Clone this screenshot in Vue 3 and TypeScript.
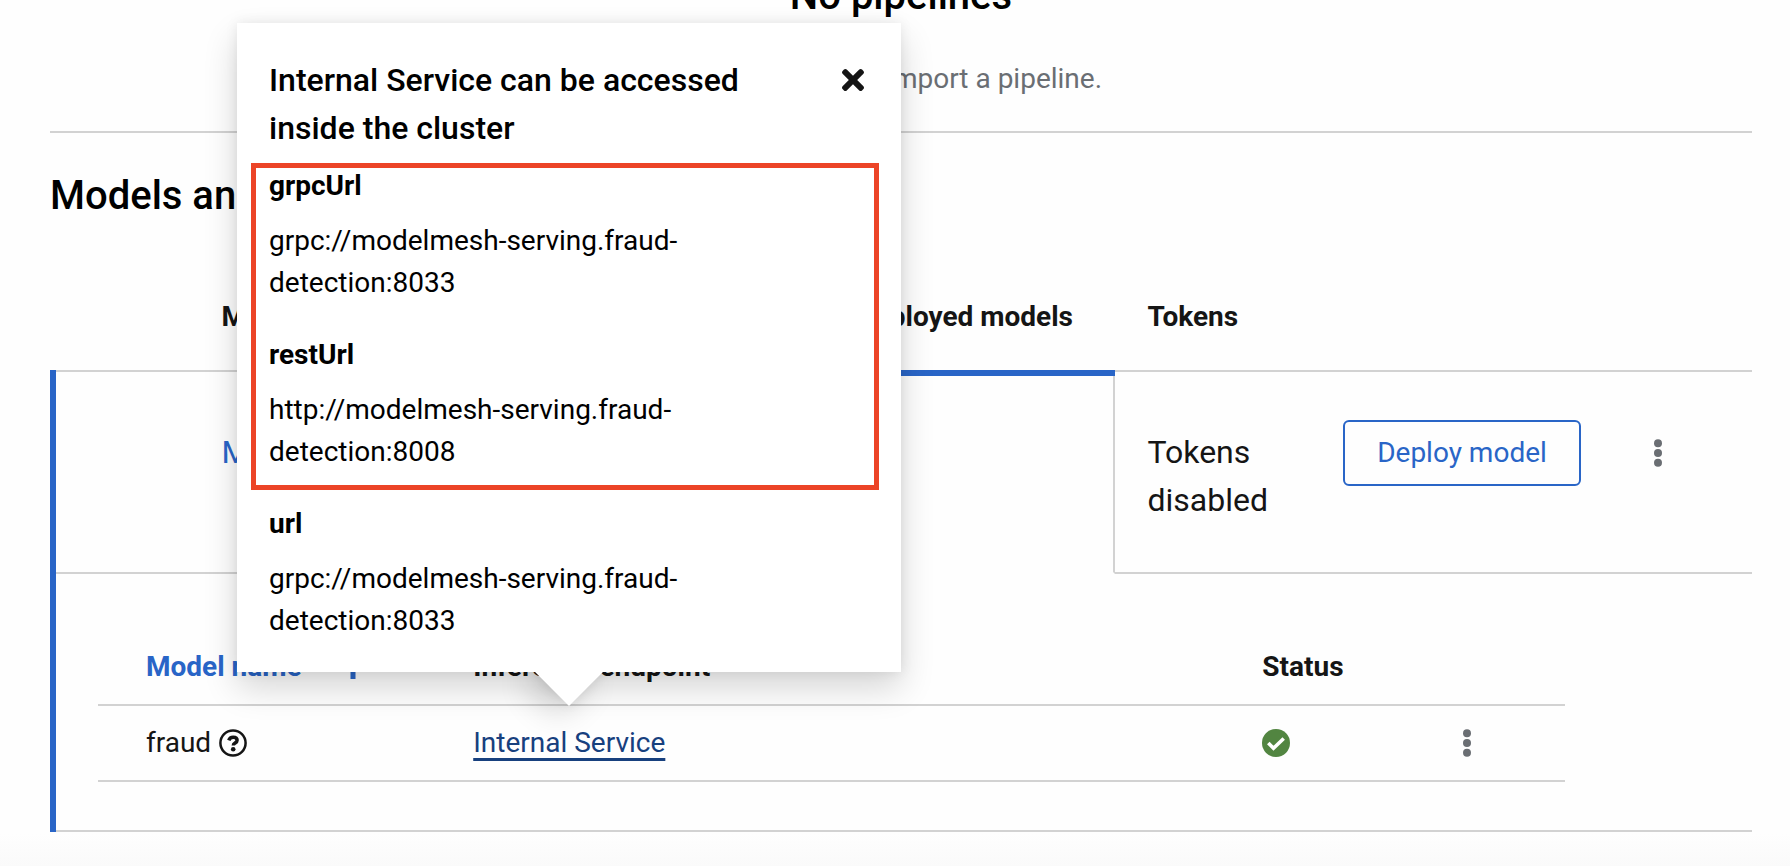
<script setup lang="ts">
import { ref } from 'vue'

interface Endpoint {
  name: string
  address: string
}

const popoverOpen = ref(true)

const endpoints: Endpoint[] = [
  { name: 'grpcUrl', address: 'grpc://modelmesh-serving.fraud-detection:8033' },
  { name: 'restUrl', address: 'http://modelmesh-serving.fraud-detection:8008' },
  { name: 'url', address: 'grpc://modelmesh-serving.fraud-detection:8033' },
]
</script>

<template>
  <main class="page">
    <section class="pipelines">
      <h2 class="heading">No pipelines</h2>
      <p class="hint">To get started, import a pipeline.</p>
    </section>

    <section class="servers">
      <h2 class="heading">Models and model servers</h2>

      <table class="server-table">
        <colgroup>
          <col class="col-toggle" />
          <col class="col-name" />
          <col class="col-deployed" />
          <col class="col-tokens" />
          <col class="col-actions" />
        </colgroup>
        <thead>
          <tr>
            <td></td>
            <th scope="col">Model server</th>
            <th scope="col">Deployed models</th>
            <th scope="col">Tokens</th>
            <td></td>
          </tr>
        </thead>
        <tbody>
          <tr class="server-row">
            <td></td>
            <td><a href="#" class="server-link">Model server</a></td>
            <td class="expanded"></td>
            <td>Tokens disabled</td>
            <td class="actions-cell">
              <div class="actions">
                <button type="button" class="deploy">Deploy model</button>
                <button type="button" class="kebab" aria-label="Server actions">
                  <svg width="10" height="28" viewBox="0 0 10 28" aria-hidden="true">
                    <circle cx="5" cy="4.3" r="4" />
                    <circle cx="5" cy="14" r="4" />
                    <circle cx="5" cy="23.7" r="4" />
                  </svg>
                </button>
              </div>
            </td>
          </tr>
          <tr>
            <td colspan="5" class="detail-cell">
              <div class="detail">
                <table class="model-table">
                  <colgroup>
                    <col class="col-model" />
                    <col class="col-endpoint" />
                    <col class="col-status" />
                    <col class="col-menu" />
                  </colgroup>
                  <thead>
                    <tr>
                      <th scope="col">
                        <button type="button" class="sort">
                          Model name
                          <svg width="18" height="28" viewBox="0 0 18 28" aria-hidden="true">
                            <path d="M9 26V5M2 11l7-8 7 8" />
                          </svg>
                        </button>
                      </th>
                      <th scope="col">Inference endpoint</th>
                      <th scope="col">Status</th>
                      <td></td>
                    </tr>
                  </thead>
                  <tbody>
                    <tr>
                      <td>
                        <span class="model">
                          fraud
                          <button type="button" class="help" aria-label="Model details">
                            <svg width="28" height="28" viewBox="0 0 28 28" aria-hidden="true">
                              <circle cx="14" cy="14" r="12.6" fill="none" stroke="currentColor" stroke-width="2.5" />
                              <path d="M9.8 11.4c.7-2.200 2.200-3.200 4.300-3.200 2.300 0 4 1.200 4 3.100 0 2.900-3.800 2.600-3.800 5.300" fill="none" stroke="currentColor" stroke-width="3.500" />
                              <circle cx="14.200" cy="20.200" r="2.300" fill="currentColor" />
                            </svg>
                          </button>
                        </span>
                      </td>
                      <td>
                        <button type="button" class="endpoint" @click="popoverOpen = !popoverOpen">Internal Service</button>
                      </td>
                      <td>
                        <svg class="status" width="28" height="28" viewBox="0 0 28 28" role="img" aria-label="Ready">
                          <circle cx="14" cy="14" r="14" fill="#528541" />
                          <path d="M6.300 14l5.200 5.200L21.700 9.500" fill="none" stroke="#fff" stroke-width="3.600" />
                        </svg>
                      </td>
                      <td>
                        <button type="button" class="kebab" aria-label="Model actions">
                          <svg width="10" height="28" viewBox="0 0 10 28" aria-hidden="true">
                            <circle cx="5" cy="4.3" r="4" />
                            <circle cx="5" cy="14" r="4" />
                            <circle cx="5" cy="23.7" r="4" />
                          </svg>
                        </button>
                      </td>
                    </tr>
                  </tbody>
                </table>
              </div>
            </td>
          </tr>
        </tbody>
      </table>
    </section>

    <div v-if="popoverOpen" class="popover" role="dialog" aria-labelledby="popover-title">
      <div class="popover-panel">
        <header class="popover-header">
          <h3 id="popover-title">Internal Service can be accessed inside the cluster</h3>
          <button type="button" class="close" aria-label="Close" @click="popoverOpen = false">
            <svg width="22" height="32" viewBox="0 0 352 512" aria-hidden="true">
              <path d="M242.720 256l100.070-100.070c12.280-12.280 12.280-32.190 0-44.480l-22.240-22.240c-12.280-12.280-32.190-12.280-44.480 0L176 189.280 75.930 89.210c-12.280-12.280-32.190-12.280-44.480 0L9.210 111.450c-12.280 12.280-12.280 32.190 0 44.480L109.280 256 9.210 356.070c-12.280 12.280-12.280 32.190 0 44.480l22.240 22.240c12.280 12.280 32.200 12.280 44.480 0L176 322.720l100.070 100.070c12.280 12.280 32.200 12.280 44.480 0l22.240-22.240c12.280-12.280 12.280-32.190 0-44.480L242.720 256z" />
            </svg>
          </button>
        </header>
        <dl class="endpoints">
          <div v-for="endpoint in endpoints" :key="endpoint.name">
            <dt>{{ endpoint.name }}</dt>
            <dd>{{ endpoint.address }}</dd>
          </div>
        </dl>
      </div>
      <div class="arrow-clip"><div class="arrow"></div></div>
      <div class="highlight"></div>
    </div>
  </main>
</template>

<style>
body {
  margin: 0;
  background: #fefefe;
}
</style>

<style scoped>
.page {
  --blue: #2965c7;
  --line: #d2d2d2;
  --ink: #151515;
  position: relative;
  display: flow-root;
  box-sizing: border-box;
  min-height: 100vh;
  padding: 0 38px 0 50px;
  overflow: hidden;
  background: linear-gradient(to bottom, #fefefe calc(100% - 32px), #fafafa);
  color: var(--ink);
  font-family: Roboto, "Liberation Sans", sans-serif;
  font-size: 28px;
  line-height: 42px;
}

button {
  margin: 0;
  padding: 0;
  border: 0;
  background: none;
  color: inherit;
  font: inherit;
  cursor: pointer;
}

.heading {
  margin: 0;
  color: #000;
  font-size: 40px;
  font-weight: 500;
  line-height: 52px;
}

/* The page is scrolled so that the empty state starts above the fold. */
.pipelines {
  margin-top: -30px;
  padding-bottom: 31px;
  border-bottom: 2px solid var(--line);
  text-align: center;
}

.hint {
  margin: 36px 0 0;
  color: #6a6e73;
}

.servers {
  margin-top: 37px;
}

table {
  width: 100%;
  border-collapse: separate;
  border-spacing: 0;
  table-layout: fixed;
}

th,
td {
  padding: 0;
  text-align: left;
  vertical-align: top;
}

th {
  font-weight: 700;
  white-space: nowrap;
}

.server-table {
  margin-top: 42px;
}

.col-toggle { width: 8.2%; }
.col-name { width: 37.3%; }
.col-deployed { width: 17.1%; }
.col-tokens { width: 11.5%; }

.server-table > thead th {
  padding: 32px;
}

.server-table > tbody {
  position: relative;
}

.server-table > tbody::before {
  content: "";
  position: absolute;
  inset: 0 auto 0 0;
  width: 6px;
  background: var(--blue);
}

.server-row > td {
  padding: 56px 32px 48px;
  border-top: 2px solid var(--line);
  border-bottom: 2px solid var(--line);
  font-size: 32px;
  line-height: 48px;
}

.server-row > .expanded {
  position: relative;
  border-right: 2px solid var(--line);
  border-bottom-color: transparent;
}

.expanded::before {
  content: "";
  position: absolute;
  inset: -2px -2px auto 0;
  height: 6px;
  background: var(--blue);
}

.server-link {
  color: var(--blue);
  text-decoration: none;
}

.server-row > .actions-cell {
  padding-top: 48px;
}

.actions {
  display: flex;
  align-items: center;
  gap: 72px;
  font-size: 28px;
  line-height: 42px;
}

.deploy {
  padding: 10px 32px;
  border: 2px solid var(--blue);
  border-radius: 6px;
  color: var(--blue);
  white-space: nowrap;
}

.kebab {
  display: flex;
  align-items: center;
  height: 42px;
  fill: #6a6e73;
}

.detail-cell {
  border-bottom: 2px solid var(--line);
}

.detail {
  padding: 56px 11% 48px 48px;
}

.col-model { width: 23.4%; }
.col-endpoint { width: 53.8%; }
.col-status { width: 13.6%; }

.model-table th,
.model-table td {
  padding: 16px 32px;
  border-bottom: 2px solid var(--line);
}

.model-table tr > :first-child {
  padding-left: 48px;
}

.sort {
  display: flex;
  align-items: center;
  gap: 42px;
  color: var(--blue);
}

.sort svg {
  fill: none;
  stroke: currentColor;
  stroke-width: 5;
}

.model {
  display: flex;
  align-items: center;
  gap: 8px;
}

.help {
  display: flex;
}

.endpoint {
  color: #17407e;
  text-decoration: underline;
  text-decoration-skip-ink: none;
  text-decoration-thickness: 3px;
  text-underline-offset: 6px;
}

.status {
  display: block;
  height: 42px;
}

.popover {
  position: absolute;
  top: 23px;
  left: 237px;
  width: 664px;
  color: #000;
}

.popover-panel {
  padding: 33px 32px 30px;
  background: #fff;
  box-shadow: 0 16px 32px rgba(3, 3, 3, 0.16), 0 0 12px rgba(3, 3, 3, 0.08);
}

.popover-header {
  display: flex;
  align-items: flex-start;
  justify-content: space-between;
  gap: 64px;
  margin-bottom: 13px;
}

.popover-header h3 {
  margin: 0;
  font-size: 32px;
  font-weight: 500;
  line-height: 48px;
}

.close {
  display: flex;
  align-items: center;
  height: 48px;
  padding: 0 5px;
  fill: var(--ink);
}

.endpoints {
  display: grid;
  gap: 30px;
  margin: 0;
}

.endpoints dt {
  font-weight: 700;
}

.endpoints dd {
  max-width: 440px;
  margin: 13px 0 0;
}

.arrow-clip {
  position: absolute;
  top: 100%;
  left: 50%;
  width: 160px;
  height: 100px;
  margin-left: -80px;
  overflow: hidden;
}

.arrow {
  width: 48px;
  height: 48px;
  margin: -24px auto 0;
  background: #fff;
  box-shadow: 0 16px 32px rgba(3, 3, 3, 0.16), 0 0 12px rgba(3, 3, 3, 0.08);
  transform: rotate(45deg);
}

.highlight {
  position: absolute;
  top: 140px;
  right: 22px;
  left: 14px;
  height: 317px;
  border: 5px solid #ec4427;
  pointer-events: none;
}
</style>
